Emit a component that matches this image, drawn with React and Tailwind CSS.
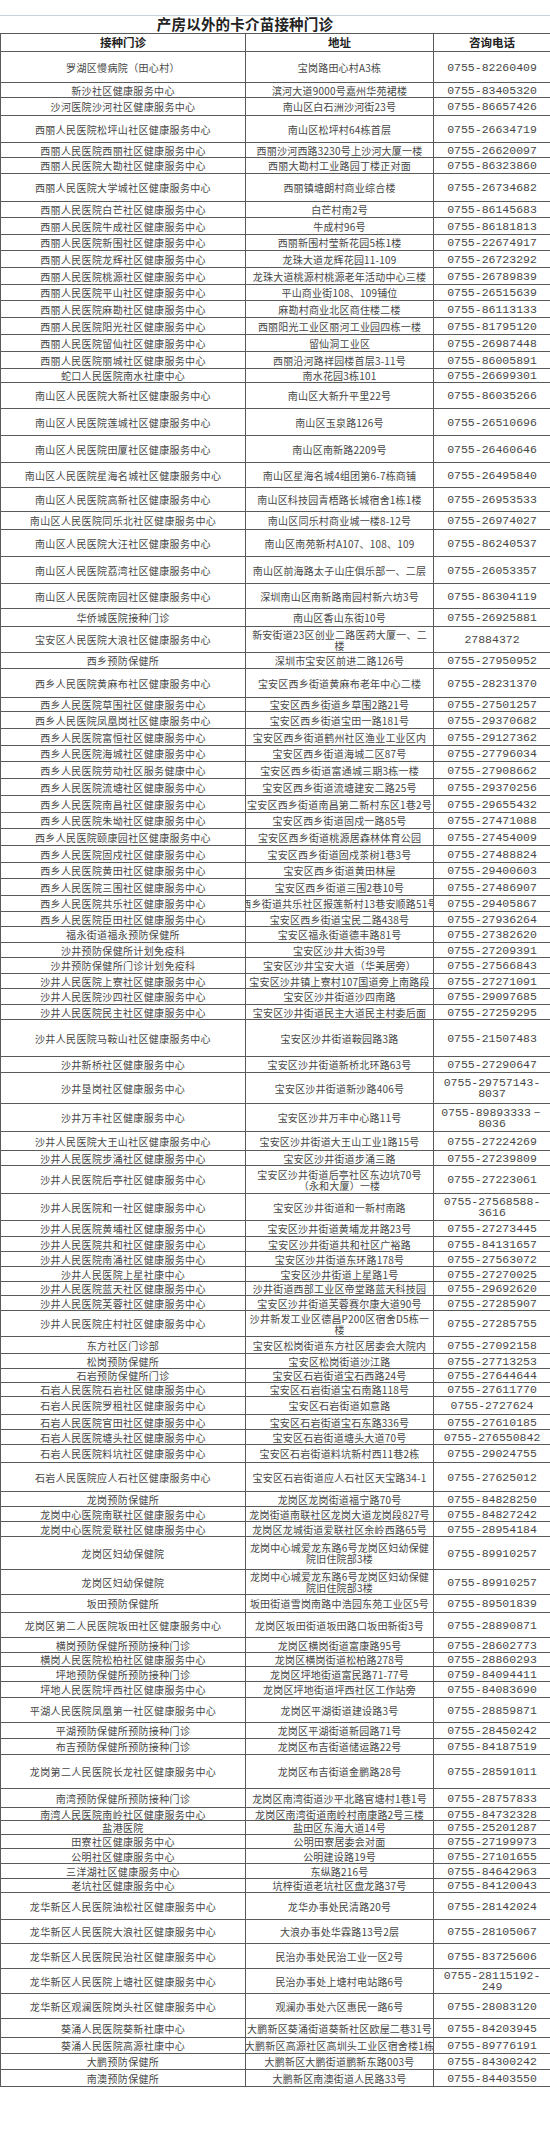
import React from 'react';

// 产房以外的卡介苗接种门诊 — [门诊, 地址, 电话, 行高]
const rows = [
  ['罗湖区慢病院（田心村）', '宝岗路田心村A3栋', '0755-82260409', 'h-[31px]'],
  ['新沙社区健康服务中心', '滨河大道9000号嘉州华苑裙楼', '0755-83405320', 'h-[15px]'],
  ['沙河医院沙河社区健康服务中心', '南山区白石洲沙河街23号', '0755-86657426', 'h-[18px]'],
  ['西丽人民医院松坪山社区健康服务中心', '南山区松坪村64栋首层', '0755-26634719', 'h-[27px]'],
  ['西丽人民医院西丽社区健康服务中心', '西丽沙河西路3230号上沙河大厦一楼', '0755-26620097', 'h-[15px]'],
  ['西丽人民医院大勘社区健康服务中心', '西丽大勘村工业路园丁楼正对面', '0755-86323860', 'h-[16px]'],
  ['西丽人民医院大学城社区健康服务中心', '西丽镇塘朗村商业综合楼', '0755-26734682', 'h-[28px]'],
  ['西丽人民医院白芒社区健康服务中心', '白芒村南2号', '0755-86145683', 'h-[16px]'],
  ['西丽人民医院牛成社区健康服务中心', '牛成村96号', '0755-86181813', 'h-[17px]'],
  ['西丽人民医院新围社区健康服务中心', '西丽新围村莹新花园5栋1楼', '0755-22674917', 'h-[16px]'],
  ['西丽人民医院龙辉社区健康服务中心', '龙珠大道龙辉花园11-109', '0755-26723292', 'h-[17px]'],
  ['西丽人民医院桃源社区健康服务中心', '龙珠大道桃源村桃源老年活动中心三楼', '0755-26789839', 'h-[17px]'],
  ['西丽人民医院平山社区健康服务中心', '平山商业街108、109铺位', '0755-26515639', 'h-[16px]'],
  ['西丽人民医院麻勘社区健康服务中心', '麻勘村商业北区商住楼二楼', '0755-86113133', 'h-[17px]'],
  ['西丽人民医院阳光社区健康服务中心', '西丽阳光工业区丽河工业园四栋一楼', '0755-81795120', 'h-[17px]'],
  ['西丽人民医院留仙社区健康服务中心', '留仙洞工业区', '0755-26987448', 'h-[17px]'],
  ['西丽人民医院丽城社区健康服务中心', '西丽沿河路祥园楼首层3-11号', '0755-86005891', 'h-[17px]'],
  ['蛇口人民医院南水社康中心', '南水花园3栋101', '0755-26699301', 'h-[14px]'],
  ['南山区人民医院大新社区健康服务中心', '南山区大新升平里22号', '0755-86035266', 'h-[26px]'],
  ['南山区人民医院莲城社区健康服务中心', '南山区玉泉路126号', '0755-26510696', 'h-[27px]'],
  ['南山区人民医院田厦社区健康服务中心', '南山区南新路2209号', '0755-26460646', 'h-[27px]'],
  ['南山区人民医院星海名城社区健康服务中心', '南山区星海名城4组团第6-7栋商铺', '0755-26495840', 'h-[25px]'],
  ['南山区人民医院高新社区健康服务中心', '南山区科技园青梧路长城宿舍1栋1楼', '0755-26953533', 'h-[24px]'],
  ['南山区人民医院同乐北社区健康服务中心', '南山区同乐村商业城一楼8-12号', '0755-26974027', 'h-[18px]'],
  ['南山区人民医院大汪社区健康服务中心', '南山区南苑新村A107、108、109', '0755-86240537', 'h-[27px]'],
  ['南山区人民医院荔湾社区健康服务中心', '南山区前海路太子山庄俱乐部一、二层', '0755-26053357', 'h-[27px]'],
  ['南山区人民医院南园社区健康服务中心', '深圳南山区南新路南园村新六坊3号', '0755-86304119', 'h-[25px]'],
  ['华侨城医院接种门诊', '南山区香山东街10号', '0755-26925881', 'h-[18px]'],
  ['宝安区人民医院大浪社区健康服务中心', '新安街道23区创业二路医药大厦一、二\n楼', '27884372', 'h-[26px]'],
  ['西乡预防保健所', '深圳市宝安区前进二路126号', '0755-27950952', 'h-[16px]'],
  ['西乡人民医院黄麻布社区健康服务中心', '宝安区西乡街道黄麻布老年中心二楼', '0755-28231370', 'h-[29px]'],
  ['西乡人民医院草围社区健康服务中心', '宝安区西乡街道乡草围2路21号', '0755-27501257', 'h-[14px]'],
  ['西乡人民医院凤凰岗社区健康服务中心', '宝安区西乡街道宝田一路181号', '0755-29370682', 'h-[17px]'],
  ['西乡人民医院富恒社区健康服务中心', '宝安区西乡街道鹤州社区渔业工业区内', '0755-29127362', 'h-[17px]'],
  ['西乡人民医院海城社区健康服务中心', '宝安区西乡街道海城二区87号', '0755-27796034', 'h-[16px]'],
  ['西乡人民医院劳动社区服务健康中心', '宝安区西乡街道富通城三期3栋一楼', '0755-27908662', 'h-[17px]'],
  ['西乡人民医院流塘社区健康服务中心', '宝安区西乡街道流塘建安二路25号', '0755-29370256', 'h-[17px]'],
  ['西乡人民医院南昌社区健康服务中心', '宝安区西乡街道南昌第二新村东区1巷2号', '0755-29655432', 'h-[17px]'],
  ['西乡人民医院朱坳社区健康服务中心', '宝安区西乡街道固戍一路85号', '0755-27471088', 'h-[16px]'],
  ['西乡人民医院颐康园社区健康服务中心', '宝安区西乡街道桃源居森林体育公园', '0755-27454009', 'h-[17px]'],
  ['西乡人民医院固戍社区健康服务中心', '宝安区西乡街道固戍茶树1巷3号', '0755-27488824', 'h-[17px]'],
  ['西乡人民医院黄田社区健康服务中心', '宝安区西乡街道黄田林屋', '0755-29400603', 'h-[16px]'],
  ['西乡人民医院三围社区健康服务中心', '宝安区西乡街道三围2巷10号', '0755-27486907', 'h-[17px]'],
  ['西乡人民医院共乐社区健康服务中心', '西乡街道共乐社区报莲新村13巷安顺路51号', '0755-29405867', 'h-[16px]'],
  ['西乡人民医院臣田社区健康服务中心', '宝安区西乡街道宝民二路438号', '0755-27936264', 'h-[15px]'],
  ['福永街道福永预防保健所', '宝安区福永街道德丰路81号', '0755-27382620', 'h-[16px]'],
  ['沙井预防保健所计划免疫科', '宝安区沙井大街39号', '0755-27209391', 'h-[15px]'],
  ['沙井预防保健所门诊计划免疫科', '宝安区沙井宝安大道（华美居旁）', '0755-27566843', 'h-[16px]'],
  ['沙井人民医院上寮社区健康服务中心', '宝安区沙井镇上寮村107国道旁上南路段', '0755-27271091', 'h-[15px]'],
  ['沙井人民医院沙四社区健康服务中心', '宝安区沙井街道沙四南路', '0755-29097685', 'h-[16px]'],
  ['沙井人民医院民主社区健康服务中心', '宝安区沙井街道民主大道民主村委后面', '0755-27259295', 'h-[15px]'],
  ['沙井人民医院马鞍山社区健康服务中心', '宝安区沙井街道鞍园路3路', '0755-21507483', 'h-[37px]'],
  ['沙井新桥社区健康服务中心', '宝安区沙井街道新桥北环路63号', '0755-27290647', 'h-[16px]'],
  ['沙井垦岗社区健康服务中心', '宝安区沙井街道新沙路406号', '0755-29757143-\n8037', 'h-[31px]'],
  ['沙井万丰社区健康服务中心', '宝安区沙井万丰中心路11号', '0755-89893333－\n8036', 'h-[28px]'],
  ['沙井人民医院大王山社区健康服务中心', '宝安区沙井街道大王山工业1路15号', '0755-27224269', 'h-[19px]'],
  ['沙井人民医院步涌社区健康服务中心', '宝安区沙井街道步涌三路', '0755-27239809', 'h-[15px]'],
  ['沙井人民医院后亭社区健康服务中心', '宝安区沙井街道后亭社区东边坑70号\n（永和大厦）一楼', '0755-27223061', 'h-[28px]'],
  ['沙井人民医院和一社区健康服务中心', '宝安区沙井街道和一新村南路', '0755-27568588-\n3616', 'h-[27px]'],
  ['沙井人民医院黄埔社区健康服务中心', '宝安区沙井街道黄埔龙井路23号', '0755-27273445', 'h-[16px]'],
  ['沙井人民医院共和社区健康服务中心', '宝安区沙井街道共和社区广裕路', '0755-84131657', 'h-[15px]'],
  ['沙井人民医院南涌社区健康服务中心', '宝安区沙井街道东环路178号', '0755-27563072', 'h-[15px]'],
  ['沙井人民医院上星社康中心', '宝安区沙井街道上星路1号', '0755-27270025', 'h-[15px]'],
  ['沙井人民医院蓝天社区健康服务中心', '沙井街道西部工业区帝堂路蓝天科技园', '0755-29692620', 'h-[14px]'],
  ['沙井人民医院芙蓉社区健康服务中心', '宝安区沙井街道芙蓉赛尔康大道90号', '0755-27285907', 'h-[15px]'],
  ['沙井人民医院庄村社区健康服务中心', '沙井新发工业区德昌P200区宿舍D5栋一\n楼', '0755-27285755', 'h-[26px]'],
  ['东方社区门诊部', '宝安区松岗街道东方社区居委会大院内', '0755-27092158', 'h-[17px]'],
  ['松岗预防保健所', '宝安区松岗街道沙江路', '0755-27713253', 'h-[15px]'],
  ['石岩预防保健所门诊', '宝安区石岩街道宝石西路24号', '0755-27644644', 'h-[14px]'],
  ['石岩人民医院石岩社区健康服务中心', '宝安区石岩街道宝石南路118号', '0755-27611770', 'h-[14px]'],
  ['石岩人民医院罗租社区健康服务中心', '宝安区石岩街道如意路', '0755-2727624', 'h-[18px]'],
  ['石岩人民医院官田社区健康服务中心', '宝安区石岩街道宝石东路336号', '0755-27610185', 'h-[15px]'],
  ['石岩人民医院塘头社区健康服务中心', '宝安区石岩街道塘头大道70号', '0755-276550842', 'h-[15px]'],
  ['石岩人民医院料坑社区健康服务中心', '宝安区石岩街道料坑新村西11巷2栋', '0755-29024755', 'h-[18px]'],
  ['石岩人民医院应人石社区健康服务中心', '宝安区石岩街道应人石社区天宝路34-1', '0755-27625012', 'h-[29px]'],
  ['龙岗预防保健所', '龙岗区龙岗街道福宁路70号', '0755-84828250', 'h-[15px]'],
  ['龙岗中心医院南联社区健康服务中心', '龙岗街道南联社区龙岗大道龙岗段827号', '0755-84827242', 'h-[15px]'],
  ['龙岗中心医院爱联社区健康服务中心', '龙岗区龙城街道爱联社区余岭西路65号', '0755-28954184', 'h-[15px]'],
  ['龙岗区妇幼保健院', '龙岗中心城爱龙东路6号龙岗区妇幼保健\n院旧住院部3楼', '0755-89910257', 'h-[33px]'],
  ['龙岗区妇幼保健院', '龙岗中心城爱龙东路6号龙岗区妇幼保健\n院旧住院部3楼', '0755-89910257', 'h-[25px]'],
  ['坂田预防保健所', '坂田街道雪岗南路中浩园东苑工业区5号', '0755-89501839', 'h-[18px]'],
  ['龙岗区第二人民医院坂田社区健康服务中心', '龙岗区坂田街道坂田路口坂田新街3号', '0755-28890871', 'h-[25px]'],
  ['横岗预防保健所预防接种门诊', '龙岗区横岗街道富康路95号', '0755-28602773', 'h-[15px]'],
  ['横岗人民医院松柏社区健康服务中心', '龙岗区横岗街道松柏路278号', '0755-28860293', 'h-[14px]'],
  ['坪地预防保健所预防接种门诊', '龙岗区坪地街道富民路71-77号', '0759-84094411', 'h-[15px]'],
  ['坪地人民医院坪西社区健康服务中心', '龙岗区坪地街道坪西社区工作站旁', '0755-84083690', 'h-[16px]'],
  ['平湖人民医院凤凰第一社区健康服务中心', '龙岗区平湖街道建设路3号', '0755-28859871', 'h-[25px]'],
  ['平湖预防保健所预防接种门诊', '龙岗区平湖街道新园路71号', '0755-28450242', 'h-[16px]'],
  ['布吉预防保健所预防接种门诊', '龙岗区布吉街道储运路22号', '0755-84187519', 'h-[16px]'],
  ['龙岗第二人民医院长龙社区健康服务中心', '龙岗区布吉街道金鹏路28号', '0755-28591011', 'h-[34px]'],
  ['南湾预防保健所预防接种门诊', '龙岗区南湾街道沙平北路官塘村1巷1号', '0755-28757833', 'h-[19px]'],
  ['南湾人民医院南岭社区健康服务中心', '龙岗区南湾街道南岭村南康路2号三楼', '0755-84732328', 'h-[13px]'],
  ['盐港医院', '盐田区东海大道14号', '0755-25201287', 'h-[14px]'],
  ['田寮社区健康服务中心', '公明田寮居委会对面', '0755-27199973', 'h-[14px]'],
  ['公明社区健康服务中心', '公明建设路19号', '0755-27101655', 'h-[15px]'],
  ['三洋湖社区健康服务中心', '东纵路216号', '0755-84642963', 'h-[15px]'],
  ['老坑社区健康服务中心', '坑梓街道老坑社区盘龙路37号', '0755-84120043', 'h-[14px]'],
  ['龙华新区人民医院油松社区健康服务中心', '龙华办事处民清路20号', '0755-28142024', 'h-[27px]'],
  ['龙华新区人民医院大浪社区健康服务中心', '大浪办事处华霖路13号2层', '0755-28105067', 'h-[24px]'],
  ['龙华新区人民医院民治社区健康服务中心', '民治办事处民治工业一区2号', '0755-83725606', 'h-[25px]'],
  ['龙华新区人民医院上塘社区健康服务中心', '民治办事处上塘村电站路6号', '0755-28115192-\n249', 'h-[25px]'],
  ['龙华新区观澜医院岗头社区健康服务中心', '观澜办事处六区惠民一路6号', '0755-28083120', 'h-[25px]'],
  ['葵涌人民医院葵新社康中心', '大鹏新区葵涌街道葵新社区欧屋二巷31号', '0755-84203945', 'h-[19px]'],
  ['葵涌人民医院高源社康中心', '大鹏新区高源社区高圳头工业区宿舍楼1栋', '0755-89776191', 'h-[16px]'],
  ['大鹏预防保健所', '大鹏新区大鹏街道鹏新东路003号', '0755-84300242', 'h-[16px]'],
  ['南澳预防保健所', '大鹏新区南澳街道人民路33号', '0755-84403550', 'h-[17px]'],
];

const cell =
  'flex items-center justify-center overflow-hidden text-center whitespace-pre leading-[11px]';

const App = () => {
  return (
    <div className="min-h-screen bg-white font-['Noto_Sans_CJK_SC','Liberation_Sans',sans-serif] text-[#474747]">
      <div className="h-[15px]" />

      {/* title */}
      <div className="h-[18px] border-t border-[#c7d2da] flex items-center">
        <div className="w-[490px] flex justify-center">
          <h1 className="text-[14.5px] font-bold leading-none text-[#222] tracking-[0.2px]">产房以外的卡介苗接种门诊</h1>
        </div>
      </div>

      <div className="w-full border-l border-t border-[#5a5a5a]">
        {/* header */}
        <div className="flex h-[18px] border-b border-[#5a5a5a] text-[11.5px] font-bold text-[#222]">
          <div className={`${cell} w-[245px] border-r border-[#5a5a5a]`}>接种门诊</div>
          <div className={`${cell} w-[188px] border-r border-[#5a5a5a]`}>地址</div>
          <div className={`${cell} flex-1`}>咨询电话</div>
        </div>

        {rows.map(([name, addr, phone, h], i) => (
          <div key={i} className={`flex border-b border-[#5a5a5a] text-[10px] ${h}`}>
            <div className={`${cell} w-[245px] border-r border-[#5a5a5a] tracking-[0.35px]`}>{name}</div>
            <div className={`${cell} w-[188px] border-r border-[#5a5a5a] tracking-[0.2px]`}>{addr}</div>
            <div className={`${cell} flex-1 font-['Liberation_Mono',monospace] text-[11.5px]`}>{phone}</div>
          </div>
        ))}
      </div>
    </div>
  );
};

export default App;
